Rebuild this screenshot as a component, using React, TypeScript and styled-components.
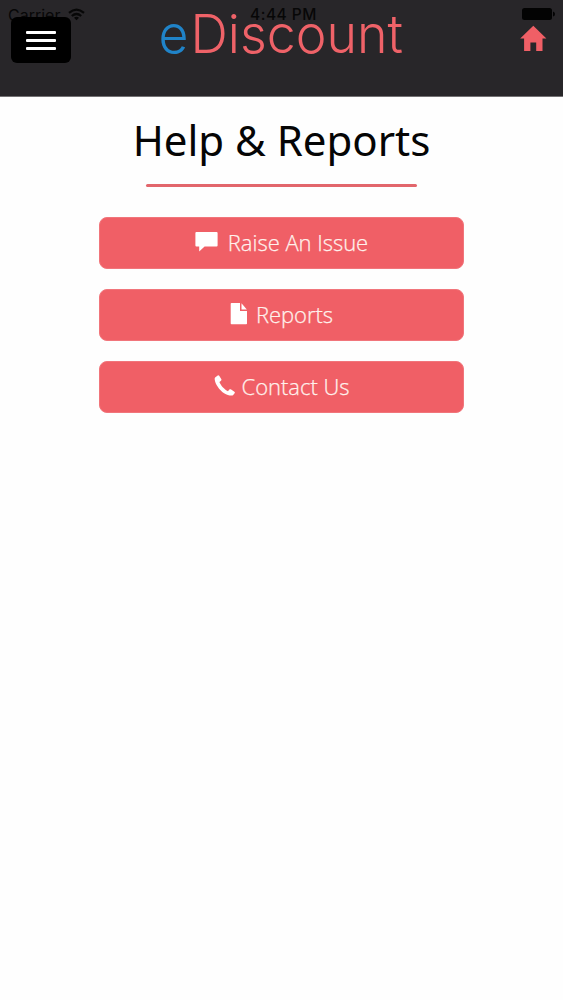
import React from 'react';
import styled, { createGlobalStyle } from 'styled-components';

const GlobalStyle = createGlobalStyle`
  * { box-sizing: border-box; }
  body { margin: 0; background: #fefefe; font-family: 'Open Sans', 'Noto Sans', sans-serif; }
`;

const Screen = styled.div`
  position: relative;
  min-height: 1000px;
  background: #fefefe;
`;

const StatusBar = styled.div`
  position: absolute;
  inset: 0 0 auto 0;
  height: 29px;
  padding: 0 8px 0 8px;
  display: grid;
  grid-template-columns: 1fr auto 1fr;
  align-items: center;
  color: #070707;
  font: 16px/28px Inter, sans-serif;
`;

const Carrier = styled.div`
  display: flex;
  align-items: center;
  gap: 8px;
`;

const Clock = styled.div`
  margin: 1px 0 0 4px;
  font-size: 15.5px;
  font-weight: 500;
  letter-spacing: 0.5px;
`;

const Battery = styled.svg`
  justify-self: end;
  margin-bottom: 2px;
`;

const Header = styled.header`
  height: 97px;
  padding: 0 16px 0 11px;
  display: flex;
  justify-content: space-between;
  align-items: flex-start;
  background: #282629;
  border-bottom: 1px solid #737173;
`;

const MenuButton = styled.button`
  position: relative;
  z-index: 1;
  width: 60px;
  height: 46px;
  margin-top: 17px;
  padding: 0 15px;
  border: 0;
  border-radius: 6px;
  background: #000;
  display: flex;
  flex-direction: column;
  justify-content: center;
  gap: 5px;
`;

const MenuLine = styled.span`
  height: 3px;
  border-radius: 1px;
  background: #fff;
`;

const Logo = styled.svg`
  width: 260px;
  height: 66px;
  margin-right: 27px;
  font-family: Inter, 'Liberation Sans', sans-serif;
  font-size: 53.5px;
  font-weight: 300;
`;

const HomeIcon = styled.svg`
  margin-top: 25px;
`;

const Main = styled.main`
  display: flex;
  flex-direction: column;
  align-items: center;
`;

const Title = styled.h1`
  margin: 13px 0 0;
  height: 61px;
  font: 400 42px/60px 'Noto Sans', sans-serif;
  color: #050505;
  white-space: nowrap;
`;

const Rule = styled.hr`
  width: 271px;
  height: 3px;
  margin: 13px 0 0;
  border: 0;
  border-radius: 2px;
  background: #e2666c;
`;

const Actions = styled.div`
  margin-top: 30px;
  display: flex;
  flex-direction: column;
  gap: 20px;
`;

const Action = styled.button<{ $gap: number }>`
  width: 365px;
  height: 52px;
  padding: 0 0 2px;
  border: 1px solid #f1757b;
  border-radius: 8px;
  background: #f05f66;
  color: #fff;
  display: flex;
  justify-content: center;
  align-items: center;
  gap: ${({ $gap }) => $gap}px;
`;

const Label = styled.span`
  font: 300 22px/30px 'Open Sans', sans-serif;
  -webkit-text-stroke: 0.25px #fff1ec;
  letter-spacing: -0.03px;
  color: #fff1ec;
`;

const CommentIcon = () => (
  <svg width="23" height="20" viewBox="0 0 23 20" fill="#fff">
    <path d="M1.4 0H21.6Q22.6 0 22.6 1V13.4Q22.6 14.4 21.6 14.4H9.6L4.2 19.4V14.4H1.4Q.4 14.4.4 13.4V1Q.4 0 1.4 0Z" />
  </svg>
);

const FileIcon = () => (
  <svg width="18" height="24" viewBox="0 0 18 24" fill="#fff">
    <path d="M1 1H10V9H17V21.5Q17 22.3 16.2 22.3H1.6Q.7 22.3.7 21.5V1.8Q.7 1 1.5 1Z" />
    <path d="M11.5 1.2L16.8 7.4H11.5Z" />
  </svg>
);

const PhoneIcon = () => (
  <svg width="22" height="24" viewBox="0 0 22 24" fill="#fff">
    <path d="M1.1 3.5L3.7 1.4Q4.6.9 5.2 1.7L7.4 5.3Q7.7 6 7 6.7L5.4 8.1C6.7 11.5 10.2 15.4 14 17.3L15.3 15.6Q15.9 14.9 16.8 15.3L20.4 17.7Q21.2 18.3 20.8 19.1L19 21.2C17.7 22.1 13.6 21.5 10.1 19.2C5.2 16 1.2 10.1.7 5.5Q.5 4.2 1.1 3.5Z" />
  </svg>
);

export default function App() {
  return (
    <>
      <GlobalStyle />
      <Screen>
        <Header>
          <MenuButton aria-label="Menu">
            <MenuLine />
            <MenuLine />
            <MenuLine />
          </MenuButton>
          <Logo viewBox="0 0 260 66">
            <text y="53" x="6.5" fill="#2083c8" textLength="30" lengthAdjust="spacingAndGlyphs">e</text>
            <text y="53" x="38.5" fill="#ef6268" textLength="212.5" lengthAdjust="spacingAndGlyphs">Discount</text>
          </Logo>
          <HomeIcon width="27" height="27" viewBox="0 0 27 27" fill="#f05f66">
            <path d="M13.3.8L26.4 13.6H22.5V26H16.2V17.5H10.4V26H4.1V13.6H.2Z" />
          </HomeIcon>
        </Header>
        <StatusBar>
          <Carrier>
            Carrier
            <svg width="17" height="13" viewBox="0 0 17 13" fill="none" stroke="#070707" strokeWidth="2.2">
              <path d="M1 4.8Q8.5-1.7 16 4.8M3.8 8Q8.5 4 13.2 8" />
              <path d="M6 9.7Q8.5 7.8 11 9.7L8.5 12.3Z" fill="#070707" stroke="none" />
            </svg>
          </Carrier>
          <Clock>4:44 PM</Clock>
          <Battery width="33" height="14" viewBox="0 0 33 14" fill="#030303">
            <rect x="0" y="1" width="30" height="12" rx="2.5" />
            <path d="M31 4.5Q33 5 33 7T31 9.5Z" />
          </Battery>
        </StatusBar>
        <Main>
          <Title>Help &amp; Reports</Title>
          <Rule />
          <Actions>
            <Action $gap={10}>
              <CommentIcon />
              <Label>Raise An Issue</Label>
            </Action>
            <Action $gap={8}>
              <FileIcon />
              <Label>Reports</Label>
            </Action>
            <Action $gap={6}>
              <PhoneIcon />
              <Label>Contact Us</Label>
            </Action>
          </Actions>
        </Main>
      </Screen>
    </>
  );
}
